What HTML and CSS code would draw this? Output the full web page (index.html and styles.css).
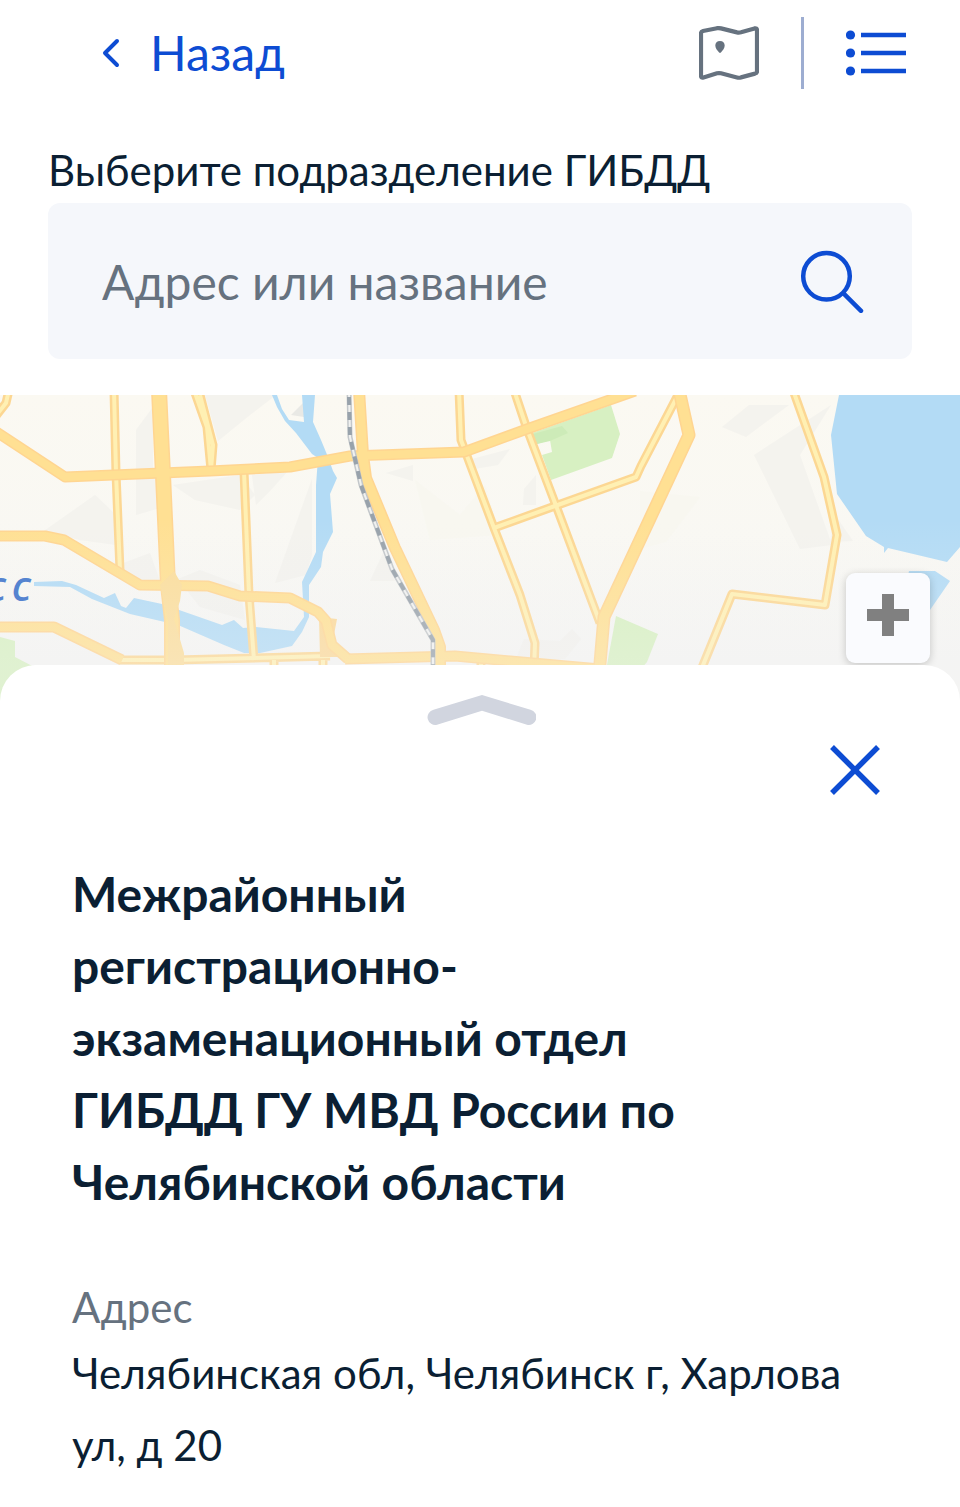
FILE: index.html
```html
<!DOCTYPE html>
<html lang="ru">
<head>
  <meta charset="UTF-8">
  <meta name="viewport" content="width=device-width, initial-scale=1">
  <title>Выбор подразделения ГИБДД</title>
  <link rel="stylesheet" href="styles.css">
</head>
<body>
  <header class="header">
    <a class="back" href="#">
      <svg width="18" height="30" viewBox="0 0 18 30" aria-hidden="true">
        <path d="M15 3 3 15 15 27" fill="none" stroke="currentColor" stroke-width="4" stroke-linecap="round" stroke-linejoin="round"/>
      </svg>
      <span>Назад</span>
    </a>
    <div class="view-switch">
      <button class="icon-button view-map" type="button" aria-label="Карта">
        <svg width="60" height="54" viewBox="0 0 60 54">
          <path d="M2 7.500Q2 5.500 4 5L18 2.200Q20 1.900 22 2.400L38 6.400Q40 6.800 42 6.300L55.500 2.400Q58 1.800 58 4V45.500Q58 47 56 47.600L42 51.400Q40 52 38 51.500L22 47.300Q20 46.800 18 47.300L4.500 51.500Q2 52.200 2 50Z" fill="none" stroke="currentColor" stroke-width="4.200" stroke-linejoin="round"/>
          <path d="M21 15C18 15 16.300 17 16.300 19.500C16.300 22.500 18.500 24.500 20.300 26.800H21.700C23.500 24.500 25.700 22.500 25.700 19.500C25.700 17 24 15 21 15Z" fill="currentColor"/>
        </svg>
      </button>
      <span class="divider"></span>
      <button class="icon-button view-list" type="button" aria-label="Список">
        <svg width="60" height="46" viewBox="0 0 60 46" fill="currentColor">
          <circle cx="4.500" cy="5" r="4.600"/>
          <circle cx="4.500" cy="23" r="4.600"/>
          <circle cx="4.500" cy="41" r="4.600"/>
          <path d="M15 2.700h45v4.600H15zM15 20.700h45v4.600H15zM15 38.700h45v4.600H15z"/>
        </svg>
      </button>
    </div>
  </header>

  <form class="search">
    <label for="search-input">Выберите подразделение ГИБДД</label>
    <div class="search-box">
      <input type="text" id="search-input" placeholder="Адрес или название">
      <button class="icon-button" type="submit" aria-label="Найти">
        <svg width="64" height="64" viewBox="0 0 64 64" fill="none" stroke="currentColor" stroke-width="4.500" stroke-linecap="round">
          <circle cx="26.500" cy="27.300" r="23.300"/>
          <path d="M43.500 44.300 61 61.800"/>
        </svg>
      </button>
    </div>
  </form>

  <div class="map">
    <svg class="map-canvas" viewBox="0 0 960 310" preserveAspectRatio="xMidYMin slice" role="img" aria-label="Карта города">
      <defs>
        <linearGradient id="land" x1="0" y1="0" x2="0" y2="1">
          <stop offset="0" stop-color="#fbf9f2"/>
          <stop offset="0.450" stop-color="#f9f8f3"/>
          <stop offset="0.850" stop-color="#f4f4f3"/>
        </linearGradient>
        <linearGradient id="fade" x1="0" y1="0" x2="0" y2="1">
          <stop offset="0.400" stop-color="#f4f4f4" stop-opacity="0"/>
          <stop offset="0.870" stop-color="#f4f4f4" stop-opacity="0.300"/>
        </linearGradient>
      </defs>
      <rect width="960" height="310" fill="url(#land)"/>

      <!-- built-up areas -->
      <g fill="#f1f0ec" opacity="0.600">
        <path d="M44 136 95 100 116 120V150L80 145Z"/>
        <path d="M136 35 153 12V76L170 80V110L136 120Z"/>
        <path d="M205 0H276L250 20 218 46Z"/>
        <path d="M173 90 240 80 255 100 240 115 195 105Z"/>
        <path d="M118 170 150 158 160 186 130 188Z"/>
        <path d="M178 184 200 175 240 190 245 225 200 212Z"/>
        <path d="M312 84V160L306 180 275 188Z"/>
        <path d="M270 96 288 76 252 80 256 110Z"/>
        <path d="M386 78 413 70V86Z"/>
        <path d="M472 64 510 54 498 70 474 74Z"/>
        <path d="M524 94 536 80V110H523Z"/>
        <path d="M370 186 383 158 395 186Z"/>
        <path d="M524 244 560 246 572 234 581 244 565 264H516Z"/>
        <path d="M722 32 749 10H789L746 42Z"/>
        <path d="M754 60 831 10 800 60 832 150 800 154Z"/>
        <path d="M835 120 853 146 830 147Z"/>
      </g>
      <path d="M291 20 304 7V22Z" fill="#e9e9e5"/>
      <path d="M415 85 460 120 485 90 500 140 430 145Z" fill="#f8f7f0"/>
      <path d="M640 96 700 102 666 147 640 154Z" fill="#f8f7f0"/>

      <!-- parks -->
      <g fill="#d7f0c2">
        <path d="M532 38 611 10 620 39 612 63 551 85 542 60 552 57 550 45 537 49Z"/>
        <path d="M0 242 15 246V262L40 275V310H0Z"/>
        <path d="M616 221 658 239 647 267 640 275H606Z"/>
      </g>
      <path d="M533 39 562 31 568 38 550 46 537 49Z" fill="#cdebb8"/>

      <!-- water -->
      <g fill="#b3dbf5">
        <path d="M839 0H960V152L947 167 888 153 884 158V152L866 141 837 99 831 40Z"/>
        <path d="M909 176H935L950 186 930 215 900 220Z"/>
        <path d="M272 0H277L282 14 289 25 304 27 302 0H315L313 27 321 45 328 62 333 76 337 83 330 99 333 137 323 157 321 172 309 190V222L302 237 292 251 260 258H244L224 250 178 230 130 219 92 204 70 192 34 191V187L62 186 76 190 104 203 115 198 121 211 126 213 134 203 162 209 222 230 234 225 243 233 256 232 294 236 304 222 302 187 316 157 316 90 318 63 312 59 296 38 285 26 277 12Z"/>
      </g>

      <!-- minor roads, casing first and surface over it -->
      <g fill="none" stroke-linejoin="round">
        <g stroke="#fcd793" stroke-width="9">
          <path d="M-5 22 6 8 9-5M114-5 116 78 120 176"/>
          <path d="M194-5 207 32 211 75M200 0 213 50 211 75"/>
          <path d="M244 76 249 200 254 265"/>
          <path d="M459-5 461 45 467 61 494 133 520 200 535 248 534 275"/>
          <path d="M514-5 527 34 555 108 600 228"/>
          <path d="M494 133 555 111 636 82 641 71 678 0"/>
          <path d="M793-5 824 82 837 140 825 210 732 199 699 280"/>
          <path d="M120 265H175L330 261M274 265V280M323 265V280M481 266V280"/>
        </g>
        <g stroke="#fff0b3" stroke-width="4">
          <path d="M-5 22 6 8 9-5M114-5 116 78 120 176"/>
          <path d="M194-5 207 32 211 75M200 0 213 50 211 75"/>
          <path d="M244 76 249 200 254 265"/>
          <path d="M459-5 461 45 467 61 494 133 520 200 535 248 534 275"/>
          <path d="M514-5 527 34 555 108 600 228"/>
          <path d="M494 133 555 111 636 82 641 71 678 0"/>
          <path d="M793-5 824 82 837 140 825 210 732 199 699 280"/>
          <path d="M120 265H175L330 261M274 265V280M323 265V280M481 266V280"/>
        </g>
      </g>

      <!-- main roads -->
      <path d="M319 222 337 224 333 245 340 262H320Z" fill="#fbd99a"/>
      <g fill="none" stroke-linejoin="round">
        <g stroke="#ffd591" stroke-width="11">
          <path d="M-5 36 65 82 210 76 290 72 350 61 464 57 527 34 635-4"/>
          <path d="M-5 141H45L64 145 140 190 208 191 240 201 290 203 318 217 326 226 332 250 348 264"/>
          <path d="M-5 232H54L122 265M345 264 455 261 600 274"/>
          <path d="M359-5 363 60 366 83 395 153 434 235 440 252V280" stroke-width="12"/>
          <path d="M679-5 689 40 604 222 599 280" stroke-width="13"/>
          <path d="M159-5 163 80 168 190 172 225V280" stroke-width="16"/>
        </g>
        <g stroke="#ffe093" stroke-width="8">
          <path d="M-5 36 65 82 210 76 290 72 350 61 464 57 527 34 635-4"/>
          <path d="M-5 141H45L64 145 140 190 208 191 240 201 290 203 318 217 326 226 332 250 348 264"/>
          <path d="M-5 232H54L122 265M345 264 455 261 600 274"/>
          <path d="M359-5 363 60 366 83 395 153 434 235 440 252V280" stroke-width="9"/>
          <path d="M679-5 689 40 604 222 599 280" stroke-width="10"/>
          <path d="M159-5 163 80 168 190 172 225V280" stroke-width="13"/>
        </g>
        <path d="M160 190 174 176 182 190 180 206 174 224 184 258V275H168V226Z" fill="#fbdd9b"/>
      </g>

      <!-- railway -->
      <g fill="none" stroke-linejoin="round">
        <path d="M349-5 350 42 361 90 392 174 433 245V280" stroke="#c3c7ca" stroke-width="5"/>
        <path d="M349-5 350 42 361 90 392 174 433 245V280" stroke="#f0f1f0" stroke-width="2" stroke-dasharray="7 8"/>
        <path d="M349 2 350 42 361 90 392 174 433 245V280" stroke="#98a2ab" stroke-width="4" stroke-dasharray="8 7"/>
      </g>

      <rect width="960" height="310" fill="url(#fade)"/>
      <text class="map-label" x="-13 12" y="206">сс</text>
    </svg>
    <button class="zoom-in" type="button" aria-label="Приблизить">
      <svg width="42" height="42" viewBox="0 0 42 42">
        <path d="M15 0h12v15h15v12H27v15H15V27H0V15h15z" fill="#808080"/>
      </svg>
    </button>
  </div>

  <main class="sheet">
    <button class="icon-button sheet-handle" type="button" aria-label="Развернуть">
      <svg width="112" height="30" viewBox="0 0 112 30">
        <path d="M58 0 106.500 14.700A7.600 7.600 0 0 1 103 29.700L58 15.800 13 29.700A7.600 7.600 0 0 1 9.500 14.700Z" fill="#d1d5df"/>
      </svg>
    </button>
    <button class="icon-button sheet-close" type="button" aria-label="Закрыть">
      <svg width="50" height="50" viewBox="0 0 50 50">
        <path d="M2 2 48 48M48 2 2 48" fill="none" stroke="currentColor" stroke-width="5.500"/>
      </svg>
    </button>
    <h1>Межрайонный регистрационно-экзаменационный отдел ГИБДД ГУ МВД России по Челябинской области</h1>
    <dl class="details">
      <dt>Адрес</dt>
      <dd>Челябинская обл, Челябинск г, Харлова ул, д 20</dd>
    </dl>
  </main>
</body>
</html>
```
FILE: styles.css
```css
* {
  box-sizing: border-box;
}
body {
  margin: 0;
  font-family: Lato, 'Open Sans', sans-serif;
  color: #0b1f33;
  background-color: #ffffff;
}
svg {
  display: block;
}
.icon-button {
  padding: 0;
  border: none;
  background: none;
  color: #0d4cd3;
  cursor: pointer;
}
.header {
  display: flex;
  justify-content: space-between;
  align-items: center;
  padding: 17px 54px 0 102px;
}
.back {
  display: flex;
  align-items: center;
  gap: 30px;
  font-size: 48px;
  line-height: 72px;
  color: #0d4cd3;
  text-decoration: none;
}
.view-switch {
  display: flex;
  align-items: center;
  gap: 42px;
}
.view-map {
  color: #66727f;
}
.divider {
  width: 3px;
  height: 72px;
  background-color: #9dadd1;
}
.search {
  padding: 56px 48px 36px;
}
.search label {
  display: block;
  margin-bottom: 8px;
  font-size: 42px;
  line-height: 50px;
}
.search-box {
  display: flex;
  align-items: center;
  height: 156px;
  padding: 0 48px 0 54px;
  border-radius: 12px;
  background-color: #f5f7fb;
}
.search-box input {
  flex: 1;
  min-width: 0;
  height: 72px;
  padding: 0;
  border: none;
  outline: none;
  background: none;
  font-family: inherit;
  font-size: 48px;
  color: #0b1f33;
}
.search-box input::placeholder {
  color: #66727f;
  opacity: 1;
}
.map {
  position: relative;
  height: 310px;
  overflow: hidden;
}
.map-canvas {
  width: 100%;
  height: 100%;
}
.map-label {
  font-family: 'Noto Sans', sans-serif;
  font-size: 42px;
  font-style: italic;
  font-weight: 500;
  fill: #5584d0;
}
.zoom-in {
  position: absolute;
  top: 178px;
  right: 30px;
  display: flex;
  justify-content: center;
  width: 84px;
  height: 90px;
  padding: 21px 0 0;
  border: none;
  border-radius: 9px;
  background-color: #fafbfe;
  box-shadow: 0 2px 8px rgba(0, 0, 0, 0.2);
  cursor: pointer;
}
.sheet {
  position: relative;
  display: flex;
  flex-direction: column;
  margin-top: -40px;
  padding: 30px 72px 25px;
  border-radius: 36px 36px 0 0;
  background-color: #ffffff;
}
.sheet-handle {
  align-self: center;
}
.sheet-close {
  align-self: flex-end;
  margin: 20px 8px 0 0;
}
h1 {
  margin: 63px 100px 59px 0;
  font-size: 48px;
  font-weight: 700;
  line-height: 72px;
}
.details {
  margin: 0;
  font-size: 42px;
}
dt {
  line-height: 60px;
  color: #66727f;
}
dd {
  margin: 0;
  line-height: 72px;
}
```
